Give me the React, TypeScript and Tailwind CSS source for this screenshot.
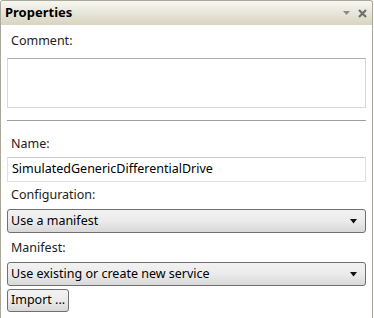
// Properties panel
const font = { fontFamily: '"Noto Sans", "Open Sans", sans-serif' };

const Arrow = () => (
  <svg width="8" height="5" viewBox="0 0 8 5" className="shrink-0">
    <path d="M0 0 H7 L3.5 4.5 Z" fill="#111" />
  </svg>
);

const Select = ({ value }: { value: string }) => (
  <div className="mx-[6px] flex h-[24px] items-center justify-between rounded-[3px] border border-[#707070] bg-gradient-to-b from-[#f2f2f2] via-[#ebebeb] to-[#d8d8d8] pl-[3px] pr-[7px] text-[12.5px] text-black">
    <span>{value}</span>
    <Arrow />
  </div>
);

export default function App() {
  return (
    <div className="h-[318px] w-[374px] bg-white" style={font}>
      <div className="flex h-full w-[373px] flex-col rounded-t-[3px] border-x border-t border-[#aaa899] bg-white">
        {/* 타이틀 바 */}
        <div className="flex h-[24px] items-center justify-between rounded-t-[3px] bg-gradient-to-b from-[#f8f7f2] to-[#d7d4c1] pl-[4px] pr-[5px]">
          <span className="text-[13px] font-bold text-black">Properties</span>
          <div className="flex items-center gap-[8px]">
            <svg width="7" height="4" viewBox="0 0 7 4">
              <path d="M0 0 H7 L3.5 4 Z" fill="#8a8a8a" />
            </svg>
            <svg width="9" height="9" viewBox="0 0 9 9">
              <path d="M1 1 L8 8 M8 1 L1 8" stroke="#6f6f6f" strokeWidth="2.2" />
            </svg>
          </div>
        </div>

        <div className="flex flex-col text-[12.5px] text-[#222]">
          <div className="ml-[10px] mt-[7px] h-[18px] leading-[18px]">Comment:</div>
          <div className="mx-[6px] mt-[8px] h-[50px] border border-[#d5d8de] border-t-[#abadb3]" />
          <div className="mx-[6px] mt-[12px] h-[1px] bg-[#a0a0a0]" />
          <div className="ml-[10px] mt-[14px] h-[18px] leading-[18px]">Name:</div>
          <div className="mx-[6px] mt-[4px] flex h-[25px] items-center border border-[#e1e1e1] border-t-[#c9c9c9] pl-[4px] text-black">
            SimulatedGenericDifferentialDrive
          </div>
          <div className="ml-[10px] mt-[4px] h-[18px] leading-[18px]">Configuration:</div>
          <div className="mt-[5px]">
            <Select value="Use a manifest" />
          </div>
          <div className="ml-[10px] mt-[6px] h-[18px] leading-[18px]">Manifest:</div>
          <div className="mt-[5px]">
            <Select value="Use existing or create new service" />
          </div>
          <div className="mx-[6px] mt-[3px] flex">
            <div className="flex h-[23px] items-center rounded-[3px] border border-[#707070] bg-gradient-to-b from-[#f2f2f2] via-[#ebebeb] to-[#d8d8d8] px-[3px] text-[12.5px] text-black">
              Import ...
            </div>
          </div>
        </div>
      </div>
    </div>
  );
}
